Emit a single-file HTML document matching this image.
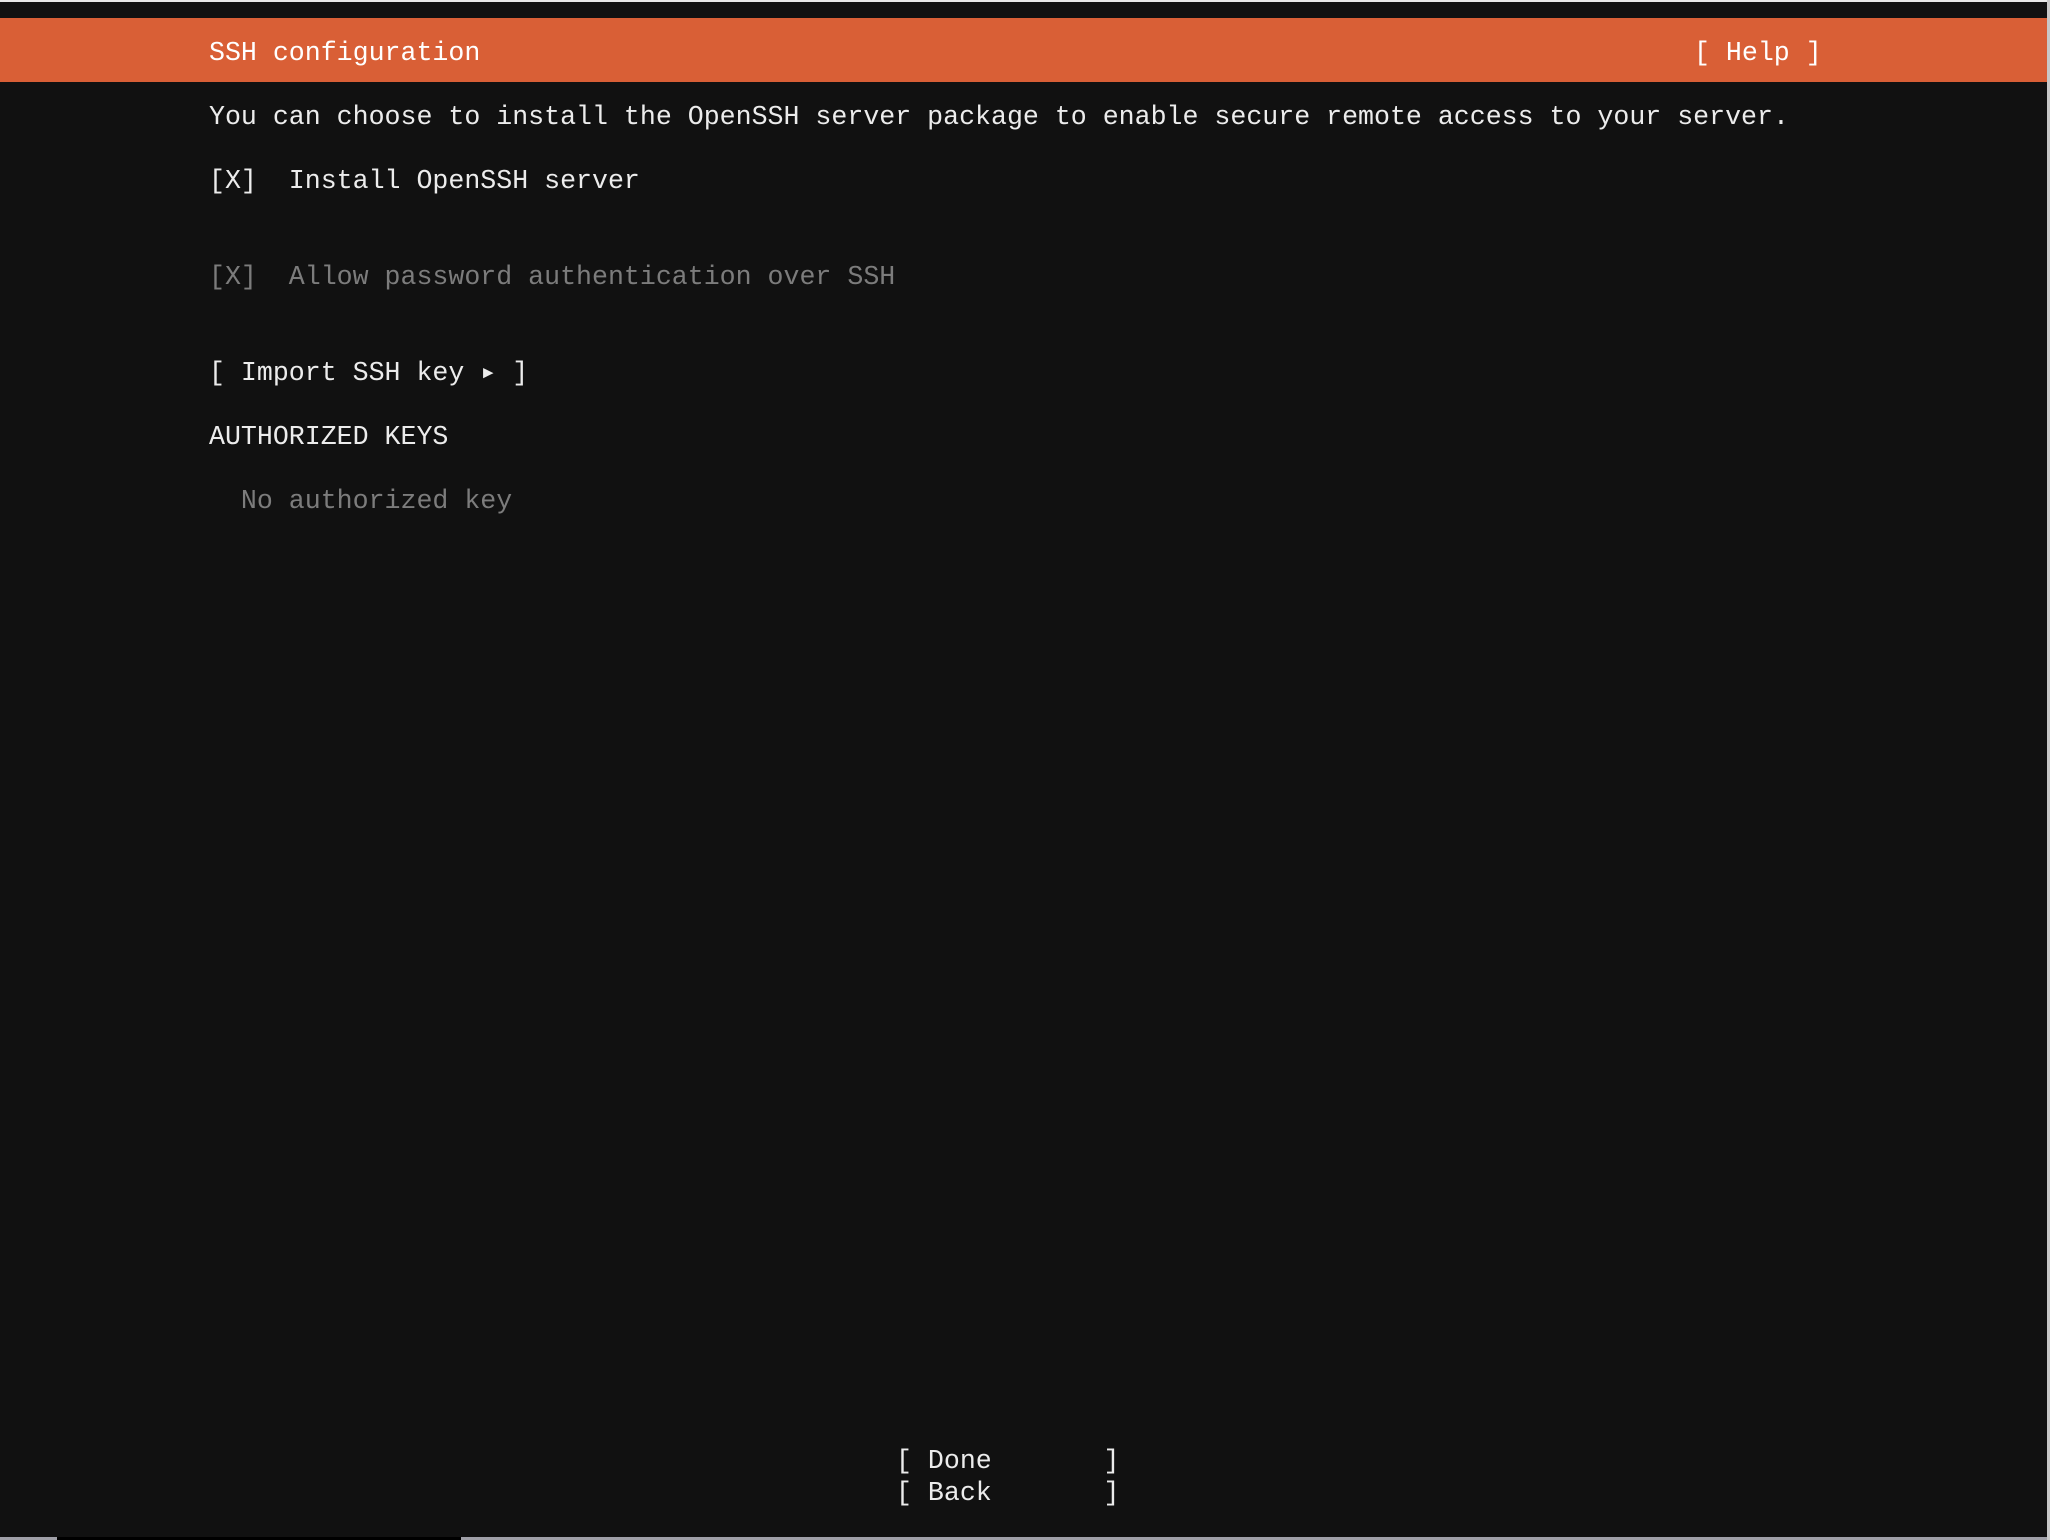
<!DOCTYPE html>
<html><head><meta charset="utf-8"><style>
html,body{margin:0;padding:0;}
body{width:2050px;height:1540px;background:#111111;position:relative;overflow:hidden;font-family:"Liberation Mono","DejaVu Sans Mono",monospace;font-size:26.6px;color:#ececec;}
.t{position:absolute;white-space:pre;line-height:32px;height:32px;}
.g{color:#7c7c7c;}
</style></head><body>
<div style="position:absolute;left:0;top:0;width:2050px;height:2px;background:#e8e8e8"></div>
<div style="position:absolute;left:0;top:18px;width:2047px;height:64px;background:#d95f36"></div>
<div style="position:absolute;left:2047px;top:0;width:3px;height:1540px;background:#c8c8c8"></div>
<div class="t" style="left:209px;top:37px;color:#fff">SSH configuration</div>
<div class="t" style="left:1694px;top:37px;color:#fff">[ Help ]</div>
<div class="t" style="left:209px;top:101px">You can choose to install the OpenSSH server package to enable secure remote access to your server.</div>
<div class="t" style="left:209px;top:165px">[X]  Install OpenSSH server</div>
<div class="t g" style="left:209px;top:261px">[X]  Allow password authentication over SSH</div>
<div class="t" style="left:209px;top:357px">[ Import SSH key ▸ ]</div>
<div class="t" style="left:209px;top:421px">AUTHORIZED KEYS</div>
<div class="t g" style="left:209px;top:485px">  No authorized key</div>
<div class="t" style="left:896px;top:1445px">[ Done       ]</div>
<div class="t" style="left:896px;top:1477px">[ Back       ]</div>
<div style="position:absolute;left:0;top:1537px;width:2047px;height:3px;background:#a0a0a8"></div>
<div style="position:absolute;left:57px;top:1537px;width:404px;height:3px;background:#000"></div>
</body></html>
